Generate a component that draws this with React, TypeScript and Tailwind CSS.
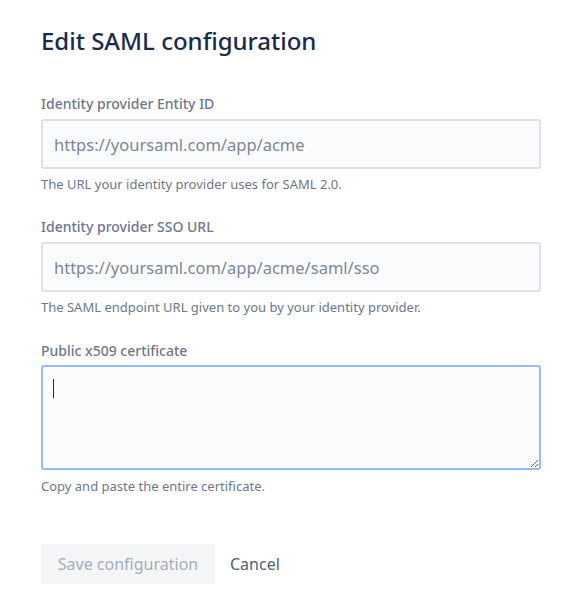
import React from 'react';

const font = { fontFamily: '"Noto Sans", "Open Sans", sans-serif' };

type FieldProps = { label: string; placeholder: string; help: string; first?: boolean };

const Field: React.FC<FieldProps> = ({ label, placeholder, help, first }) => (
    <div className={first ? 'mt-[39px]' : 'mt-[25px]'}>
        <label className="block text-[14px] leading-[20px] font-medium text-[#6B778C]">{label}</label>
        <input
            className="mt-[5px] block w-full h-[50px] rounded-[3px] border-2 border-[#DFE1E6] bg-[#FAFBFC] px-[11px] text-[16.5px] text-[#172B4D] placeholder:text-[#7A869A] outline-none"
            placeholder={placeholder}
        />
        <p className="mt-[7px] text-[13px] leading-[16px] text-[#6B778C]">{help}</p>
    </div>
);

export default function App() {
    return (
        <div className="bg-white w-[570px] h-[609px] pl-[41px] pr-[29px] pt-[27px]" style={font}>
            <h1 className="text-[24px] leading-[28px] font-medium text-[#172B4D]">Edit SAML configuration</h1>

            <Field
                first
                label="Identity provider Entity ID"
                placeholder="https://yoursaml.com/app/acme"
                help="The URL your identity provider uses for SAML 2.0."
            />
            <Field
                label="Identity provider SSO URL"
                placeholder="https://yoursaml.com/app/acme/saml/sso"
                help="The SAML endpoint URL given to you by your identity provider."
            />

            <div className="mt-[26px]">
                <label className="block text-[14px] leading-[20px] font-medium text-[#6B778C]">Public x509 certificate</label>
                <div className="relative mt-[4px]">
                    <textarea
                        className="block w-full h-[105px] rounded-[3px] border-2 border-[#94BBF3] bg-[#FCFCFC] px-[11px] py-[10px] text-[14px] text-[#172B4D] outline-none"
                    />
                    <span className="absolute left-[12px] top-[14px] w-px h-[19px] bg-[#172B4D]" />
                </div>
                <p className="mt-[8px] text-[13px] leading-[16px] text-[#6B778C]">Copy and paste the entire certificate.</p>
            </div>

            <div className="mt-[50px] flex items-center gap-[15px]">
                <button className="h-[40px] w-[174px] rounded-[3px] bg-[#F4F5F7] text-[16px] text-[#A5ADBA]">Save configuration</button>
                <button className="text-[16px] text-[#505F79]">Cancel</button>
            </div>
        </div>
    );
}
